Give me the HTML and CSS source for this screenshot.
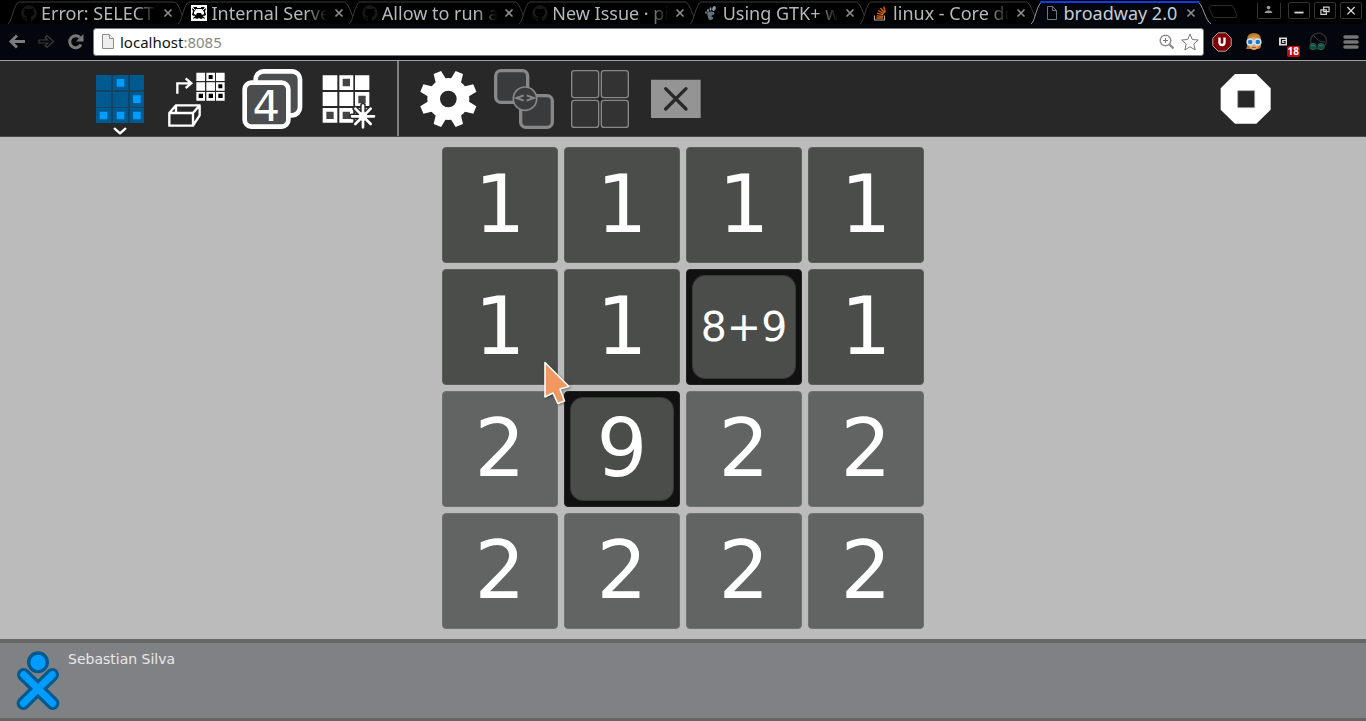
FILE: index.html
```html
<!DOCTYPE html>
<html lang="en">
<head>
    <meta charset="UTF-8">
    <meta name="viewport" content="width=device-width, initial-scale=1.0">
    <title>broadway 2.0</title>
    <link rel="stylesheet" href="styles.css">
</head>
<body>
    <!-- shared shapes -->
    <svg class="defs" width="0" height="0" aria-hidden="true">
        <defs>
            <symbol id="cross" viewBox="0 0 12 12"><path d="M2.500 2.500l7 7M9.500 2.500l-7 7" fill="none" stroke="#909090" stroke-width="1.600"/></symbol>
            <symbol id="octocat" viewBox="0 0 16 16"><path d="M8 .3a8 8 0 0 0-2.500 15.500c.4.1.5-.2.5-.4v-1.500c-2.200.5-2.700-1-2.700-1-.4-1-.9-1.200-.9-1.200-.7-.5 0-.5 0-.5.8 0 1.300.8 1.300.8.7 1.300 1.900.9 2.300.7 0-.5.3-.9.5-1.100-1.800-.2-3.600-.9-3.600-4 0-.8.3-1.500.8-2.100 0-.2-.4-1 .1-2.100 0 0 .7-.2 2.200.8a7 7 0 0 1 4 0c1.500-1 2.200-.8 2.200-.8.5 1.100.1 1.900.1 2.100.5.6.8 1.300.8 2.100 0 3.100-1.900 3.800-3.600 4 .3.200.5.700.5 1.400v2.400c0 .2.1.5.5.4A8 8 0 0 0 8 .3z" fill="#181818"/></symbol>
            <symbol id="tab" viewBox="0 0 180 24" preserveAspectRatio="none"><path d="M0 24C4 22 6 3 11 2H166C171 2 174 22 180 24" vector-effect="non-scaling-stroke"/></symbol>
        </defs>
    </svg>

    <header class="browser">
        <div class="tab-strip">
            <div class="tab">
                <svg class="tab-shape"><use href="#tab"/></svg>
                <svg class="favicon"><use href="#octocat"/></svg>
                <a class="tab-title" href="#">Error: SELECT c</a>
                <button class="tab-close" aria-label="Close tab"><svg><use href="#cross"/></svg></button>
            </div>
            <div class="tab">
                <svg class="tab-shape"><use href="#tab"/></svg>
                <svg class="favicon" viewBox="0 0 16 16"><path d="M0 0h16v16H0z" fill="#fff"/><path d="M3 2h3v1h4V2h3l2 2-1 2 1 4-2 1 1 3-2-1-2 1-2-1-2 1-2-1-2 1 1-3-2-1 1-4-1-2z" fill="#000"/><path d="M5 4h6l2 3v2l-2 1-1-2H6l-1 2-2-1V7z" fill="#fff"/><path d="M1 2l3 3M15 2l-3 3M2 12l2-1M14 12l-2-1" stroke="#fff"/></svg>
                <a class="tab-title" href="#">Internal Serve</a>
                <button class="tab-close" aria-label="Close tab"><svg><use href="#cross"/></svg></button>
            </div>
            <div class="tab">
                <svg class="tab-shape"><use href="#tab"/></svg>
                <svg class="favicon"><use href="#octocat"/></svg>
                <a class="tab-title" href="#">Allow to run ac</a>
                <button class="tab-close" aria-label="Close tab"><svg><use href="#cross"/></svg></button>
            </div>
            <div class="tab">
                <svg class="tab-shape"><use href="#tab"/></svg>
                <svg class="favicon"><use href="#octocat"/></svg>
                <a class="tab-title" href="#">New Issue · pi</a>
                <button class="tab-close" aria-label="Close tab"><svg><use href="#cross"/></svg></button>
            </div>
            <div class="tab">
                <svg class="tab-shape"><use href="#tab"/></svg>
                <svg class="favicon" viewBox="0 0 16 16"><path d="M4 8c3-2.500 8-1.500 7.500.8-.3 1.200-3.200 1.200-3 2.700.2 1 2 0 1.800 1.300C9.800 15.500 6 16 5.200 13z" fill="#60727c"/><g fill="#8194a0"><ellipse cx="11" cy="3.500" rx="1.800" ry="2.500" transform="rotate(25 11 3.500)"/><ellipse cx="7.500" cy="4" rx="1" ry="1.700"/><ellipse cx="5" cy="5.500" rx="1" ry="1.400"/><ellipse cx="3" cy="7.500" rx=".8" ry="1.200"/></g></svg>
                <a class="tab-title" href="#">Using GTK+ wi</a>
                <button class="tab-close" aria-label="Close tab"><svg><use href="#cross"/></svg></button>
            </div>
            <div class="tab">
                <svg class="tab-shape"><use href="#tab"/></svg>
                <svg class="favicon" viewBox="0 0 16 16"><path d="M1.500 10.500v4.500h10v-4.500" fill="none" stroke="#a4a8ac" stroke-width="1.200"/><path d="M3.500 13H10M3.500 10.800l6.500.6M4 8.200l6.300 1.700M5.200 5.500l5.600 3.200M7.500 3l4 5M10.800 1.500l1.500 6" stroke="#d9670c" stroke-width="1.300"/></svg>
                <a class="tab-title" href="#">linux - Core du</a>
                <button class="tab-close" aria-label="Close tab"><svg><use href="#cross"/></svg></button>
            </div>
            <div class="tab active">
                <svg class="tab-shape"><use href="#tab"/></svg>
                <svg class="tab-accent" viewBox="0 0 180 24" preserveAspectRatio="none"><path d="M9 2H168" stroke="#0d3fe0" stroke-width="2"/></svg>
                <svg class="favicon" viewBox="0 0 16 16"><path d="M3.500 1.500h5l4 4v9h-9zM8.500 1.500v4h4" fill="none" stroke="#777"/></svg>
                <a class="tab-title" href="#">broadway 2.0</a>
                <button class="tab-close" aria-label="Close tab"><svg><use href="#cross"/></svg></button>
            </div>
            <button class="new-tab" aria-label="New tab"><svg viewBox="0 0 32 16"><path d="M4 1.500h20q2 0 3 3l3 7q0 2-2 2H8q-2 0-3-3L2 4q0-2 2-2.500z" fill="none" stroke="#2c2c2c"/></svg></button>
            <div class="window-buttons">
                <button class="user" aria-label="User"><svg viewBox="0 0 24 17"><circle cx="11.500" cy="5" r="2" fill="#999"/><path d="M7.500 11V9.500q4-2.500 8 0V11z" fill="#999"/></svg></button>
                <button aria-label="Minimize"><svg viewBox="0 0 22 17"><path d="M6 10.500h10" stroke="#d8d8d8" stroke-width="2"/></svg></button>
                <button aria-label="Restore"><svg viewBox="0 0 22 17"><path d="M9.500 4.500h6v5h-6zM6.500 7.500h6v5h-6z" fill="none" stroke="#d0d0d0" stroke-width="1.300"/></svg></button>
                <button aria-label="Close"><svg viewBox="0 0 22 17"><path d="M7 4.500l8 8M15 4.500l-8 8" stroke="#d8d8d8" stroke-width="1.500"/></svg></button>
            </div>
        </div>

        <div class="nav-bar">
            <button class="nav-button" aria-label="Back"><svg viewBox="0 0 29 30"><path d="M22 14.500H8.500M14 8.500l-6 6 6 6" fill="none" stroke="#7c7c7c" stroke-width="3"/></svg></button>
            <button class="nav-button" aria-label="Forward"><svg viewBox="0 0 29 30"><path d="M7 13h8.500L13 10.500l2-2 6.500 6-6.500 6-2-2 2.500-2.500H7z" fill="none" stroke="#3c3c3c" stroke-width="1.200"/></svg></button>
            <button class="nav-button" aria-label="Reload"><svg viewBox="0 0 29 30"><path d="M19 10.500A6 6 0 1 0 20 17.500" fill="none" stroke="#787878" stroke-width="3"/><path d="M22.500 7v7.500H15z" fill="#787878"/></svg></button>
            <div class="address">
                <svg class="page-icon" viewBox="0 0 12 15"><path d="M.5.5h7l4 4v10H.5z" fill="#eee" stroke="#8c8c8c"/><path d="M7.500.5v4h4" fill="#fff" stroke="#8c8c8c"/></svg>
                <a class="url" href="#">localhost<span>:8085</span></a>
                <button aria-label="Zoom"><svg viewBox="0 0 16 18"><circle cx="6.500" cy="7.500" r="5.300" fill="none" stroke="#8c8c8c" stroke-width="1.400"/><path d="M4 7.500h5M6.500 5v5" stroke="#777"/><path d="M10.500 11.500l4 4" stroke="#8c8c8c" stroke-width="2.300"/></svg></button>
                <button class="bookmark" aria-label="Bookmark"><svg viewBox="0 0 18 18"><path d="M9 1l2.300 5.500 6 .5-4.500 4 1.400 6L9 13.700 3.800 17l1.400-6L.7 7l6-.5z" fill="#fff" stroke="#777"/></svg></button>
            </div>
            <button class="extension" aria-label="Ad blocker">
                <svg viewBox="0 0 20 20"><path d="M6.200.800h7.600l5.400 5.400v7.600l-5.400 5.400H6.200L.8 13.800V6.200z" fill="#800000" stroke="#b9a5a5"/><path d="M7.500 5.500v5a2.500 2.500 0 0 0 5 0v-5" fill="none" stroke="#fff" stroke-width="2.400"/></svg>
            </button>
            <button class="extension" aria-label="Goggles">
                <svg viewBox="0 0 20 20"><path d="M3 8q0-7 7-7t7 7v7l-2 2H2q2-3 1-9z" fill="#b3782a"/><ellipse cx="10" cy="11" rx="5.500" ry="7" fill="#e7a36a"/><path d="M4 7q2-5 10-4l2 4-6-2z" fill="#c88a35"/><circle cx="6.200" cy="10" r="3" fill="#1a78c2" stroke="#cfe6f5" stroke-width="1.500"/><circle cx="13.800" cy="10" r="3" fill="#1a78c2" stroke="#cfe6f5" stroke-width="1.500"/><path d="M8 15.500h4" stroke="#a45b36"/></svg>
            </button>
            <button class="extension" aria-label="Notifications, 18 new">
                <svg viewBox="0 0 20 20"><path d="M3 5.500h8v8H3z" fill="#ddd"/><path d="M9.500 7.500h-4v4h3.500V9.500H7.500" fill="none" stroke="#111" stroke-width="1.200"/></svg>
                <span class="badge">18</span>
            </button>
            <button class="extension" aria-label="Night mode">
                <svg viewBox="0 0 20 20"><circle cx="10.500" cy="9" r="8" fill="none" stroke="#2c2c2c" stroke-width="1.500"/><path d="M6 4l5 5 6 1" fill="none" stroke="#3a3a3a"/><g fill="#174b40" stroke="#235f52"><rect x="2" y="11.500" width="6" height="6" rx="2"/><rect x="10" y="11.500" width="6" height="6" rx="2"/></g><path d="M3 13.500h4M11 13.500h4" stroke="#2a7866"/></svg>
            </button>
            <button class="extension" aria-label="Menu">
                <svg viewBox="0 0 20 20"><path d="M5 5h12M5 10h12M5 15h12" stroke="#757575" stroke-width="3.500" stroke-linecap="round"/></svg>
            </button>
        </div>
    </header>

    <div class="toolbar">
        <button aria-label="Activity">
            <svg viewBox="6 3 228 225">
                <path d="M48 45h45v45H48zM99 45h45v45H99zM149 45h43v45h-43zM48 96h45v45H48zM99 96h45v45H99zM149 96h43v45h-43zM48 144h45v45H48zM99 144h45v45H99zM149 144h43v45h-43z" fill="#005a90"/>
                <path d="M93 45h6v144h-6zM144 45h5v144h-5zM48 90h144v6H48zM48 141h144v3H48z" fill="#124466"/>
                <path d="M110 57h23v23h-23zM159 106h23v23h-23zM59 155h23v23H59zM110 155h23v23h-23zM159 155h23v23h-23z" fill="#009dff"/>
                <path d="M104 206l16 14 16-14" fill="none" stroke="#fff" stroke-width="7" stroke-linecap="round" stroke-linejoin="round"/>
            </svg>
        </button>
        <button aria-label="Export pattern">
            <svg viewBox="234 3 228 225">
                <path d="M292 101V70h42M317 55l17 15-17 14" fill="none" stroke="#fff" stroke-width="7"/>
                <path d="M349 38h26v25h-26zM379 38h26v25h-26zM408 38h26v25h-26zM349 67h26v25h-26zM379 67h26v25h-26zM408 67h26v25h-26zM349 96h26v26h-26zM379 96h26v26h-26zM408 96h26v26h-26z" fill="#fff"/>
                <path d="M386 45h12v12h-12zM415 73h12v12h-12zM356 101h13v13h-13zM386 101h13v13h-13zM415 101h13v13h-13z" fill="#000"/>
                <path d="M268 159h71v38h-71zM268 159l20-23h71l-20 23M359 136v30l-20 31M288 136v22M339 159l20-23" fill="none" stroke="#fff" stroke-width="7" stroke-linejoin="round"/>
            </svg>
        </button>
        <button aria-label="Number cards">
            <svg viewBox="462 3 228 225">
                <rect x="527" y="34" width="133" height="132" rx="24" fill="#4c4d4f" stroke="#fff" stroke-width="14"/>
                <rect x="494" y="68" width="131" height="132" rx="20" fill="#4c4d4f" stroke="#fff" stroke-width="14"/>
                <text class="card-number" x="559" y="182">4</text>
            </svg>
        </button>
        <button aria-label="New pattern">
            <svg viewBox="690 3 228 225">
                <path d="M728 46h44v44h-44zM778 46h42v44h-42zM825 46h43v44h-43zM728 96h44v42h-44zM778 96h42v42h-42zM825 96h43v42h-43zM728 144h44v44h-44zM778 144h42v44h-42zM825 144h43v44h-43z" fill="#fff"/>
                <path d="M788 56h22v23h-22zM835 107h22v23h-22zM739 155h22v22h-22zM788 155h22v22h-22z" fill="#444"/>
                <path d="M849 137v65M816 169h66M826 146l46 46M872 146l-46 46" stroke="#282828" stroke-width="17" stroke-linecap="round"/>
                <path d="M849 137v65M816 169h66M826 146l46 46M872 146l-46 46" stroke="#fff" stroke-width="8" stroke-linecap="round"/>
                <circle cx="849" cy="169" r="13" fill="#fff"/>
            </svg>
        </button>
        <div class="separator"></div>
        <button aria-label="Settings">
            <svg viewBox="45 3 228 225">
                <g transform="translate(160 117)">
                    <g fill="#fff" transform="rotate(22.500)">
                        <path id="tooth" d="M-17-55L-12-86H12L17-55z"/>
                        <use href="#tooth" transform="rotate(45)"/><use href="#tooth" transform="rotate(90)"/><use href="#tooth" transform="rotate(135)"/><use href="#tooth" transform="rotate(180)"/><use href="#tooth" transform="rotate(225)"/><use href="#tooth" transform="rotate(270)"/><use href="#tooth" transform="rotate(315)"/>
                    </g>
                    <circle r="44" fill="none" stroke="#fff" stroke-width="38"/>
                </g>
            </svg>
        </button>
        <button aria-label="Match pairs">
            <svg viewBox="273 3 228 225">
                <rect x="302" y="32" width="96" height="95" rx="16" fill="#3a3b3d" stroke="#888" stroke-width="10"/>
                <rect x="377" y="107" width="95" height="95" rx="16" fill="#3a3b3d" stroke="#888" stroke-width="10"/>
                <circle cx="390" cy="116" r="35" fill="#3a3b3d" stroke="#888" stroke-width="5"/>
                <path d="M386 106l-22 8 22 8M395 106l22 8-22 8" fill="none" stroke="#888" stroke-width="6"/>
            </svg>
        </button>
        <button aria-label="Grid size">
            <svg viewBox="501 3 228 225" fill="#333" stroke="#888" stroke-width="4">
                <rect x="530" y="32" width="81" height="81" rx="8"/><rect x="619" y="32" width="81" height="81" rx="8"/>
                <rect x="530" y="121" width="81" height="81" rx="8"/><rect x="619" y="121" width="81" height="81" rx="8"/>
            </svg>
        </button>
        <button aria-label="Clear">
            <svg viewBox="729 3 228 225">
                <path d="M768 59h149v115H768z" fill="#949494"/>
                <path d="M812 86l61 61M873 86l-61 61" stroke="#282828" stroke-width="10" stroke-linecap="round"/>
            </svg>
        </button>
        <button class="stop" aria-label="Stop">
            <svg viewBox="54 3 228 225">
                <path d="M135 42h64l43 43v64l-43 42h-64l-43-42V85z" fill="#fff"/>
                <path d="M143 92h51v51h-51z" fill="#282828" stroke="#aaa" stroke-width="2"/>
            </svg>
        </button>
    </div>

    <main class="game">
        <div class="board">
            <button class="tile">1</button>
            <button class="tile">1</button>
            <button class="tile">1</button>
            <button class="tile">1</button>

            <button class="tile">1</button>
            <button class="tile">1</button>
            <button class="tile selected sum"><span>8+9</span></button>
            <button class="tile">1</button>

            <button class="tile light">2</button>
            <button class="tile selected"><span>9</span></button>
            <button class="tile light">2</button>
            <button class="tile light">2</button>

            <button class="tile light">2</button>
            <button class="tile light">2</button>
            <button class="tile light">2</button>
            <button class="tile light">2</button>

            <svg class="pointer" viewBox="0 0 40 54"><path d="M10 7.500L34 31.500 25 34l4.500 12-6.700 2.500L18 38l-8 4z" fill="#f09860" stroke="#fff" stroke-width="1.600" stroke-linejoin="round"/></svg>
        </div>
    </main>

    <footer class="players">
        <svg class="buddy" viewBox="48 57 132 183" fill="#009dff" stroke="#005a8f" stroke-linecap="round">
            <g stroke-width="40"><path d="M71 131l87 86M157 131l-87 86"/></g>
            <g stroke="#009dff" stroke-width="21"><path d="M71 131l87 86M157 131l-87 86"/></g>
            <circle cx="114" cy="94" r="28" stroke-width="10"/>
        </svg>
        <span class="player-name">Sebastian Silva</span>
    </footer>
</body>
</html>
```
FILE: styles.css
```css
* {
    box-sizing: border-box;
    margin: 0;
    padding: 0;
}

body {
    background: #bbb;
    min-height: 100vh;
    display: flex;
    flex-direction: column;
    font-family: 'DejaVu Sans', sans-serif;
}

button {
    background: none;
    border: none;
    color: inherit;
    font: inherit;
    cursor: pointer;
}

a {
    color: inherit;
    text-decoration: none;
}

svg {
    display: block;
}

.defs {
    position: absolute;
}

/* browser window */
.browser {
    background: #03070d;
    border-bottom: 1px solid #a0a0a0;
    font-family: 'Noto Sans', sans-serif;
}

.tab-strip {
    display: flex;
    height: 25px;
    padding: 0 4px 0 8px;
    background: #000;
    border-bottom: 1px solid #03070d;
}

.tab {
    position: relative;
    display: flex;
    align-items: center;
    flex: 1;
    min-width: 0;
    gap: 4px;
    padding: 1px 4px 0 13px;
    color: #b4b8ba;
}

.tab-shape,
.tab-accent {
    position: absolute;
    top: 0;
    left: 0;
    width: calc(100% + 10px);
    height: 24px;
    fill: #000;
    stroke: #3a3a3a;
}

.tab.active {
    color: #c4cdd4;
}

.tab.active .tab-shape {
    fill: #03070d;
    stroke: #999;
}

.favicon {
    position: relative;
    flex: none;
    width: 16px;
    height: 16px;
}

.tab-title {
    position: relative;
    flex: 1;
    min-width: 0;
    margin-right: -14px;
    overflow: hidden;
    white-space: nowrap;
    font-size: 18px;
    line-height: 22px;
    -webkit-mask-image: linear-gradient(to right, #000 72%, transparent 88%);
    mask-image: linear-gradient(to right, #000 72%, transparent 88%);
}

.tab.active .tab-title {
    -webkit-mask-image: none;
    mask-image: none;
}

.tab-close {
    position: relative;
    width: 12px;
    height: 12px;
}

.tab-close svg {
    width: 12px;
    height: 12px;
}

.new-tab {
    width: 32px;
    margin: 4px 18px 4px 6px;
}

.window-buttons {
    display: flex;
    align-items: flex-start;
    gap: 4px;
    padding-top: 2px;
}

.window-buttons button {
    width: 22px;
    height: 17px;
    border: 1px solid #333;
    border-radius: 2px;
}

.window-buttons .user {
    width: 24px;
    margin-right: 3px;
    border-top-color: #000;
}

.nav-bar {
    display: flex;
    align-items: center;
    height: 35px;
    padding: 0 0 2px 3px;
}

.nav-button {
    width: 29px;
    height: 30px;
}

.address {
    flex: 1;
    display: flex;
    align-items: center;
    gap: 6px;
    height: 28px;
    margin: 0 2px 0 3px;
    padding: 0 4px 0 8px;
    background: #fff;
    border: 1px solid #777;
    border-radius: 3px;
}

.page-icon {
    width: 12px;
    height: 15px;
}

.address button {
    width: 16px;
    height: 18px;
}

.address .bookmark {
    width: 18px;
}

.url {
    flex: 1;
    color: #111;
    font-size: 15px;
    line-height: 22px;
}

.url span {
    color: #888;
}

.extension {
    position: relative;
    display: flex;
    align-items: center;
    justify-content: center;
    width: 32px;
    height: 32px;
}

.extension svg {
    width: 20px;
    height: 20px;
}

.badge {
    position: absolute;
    right: 2px;
    bottom: 1px;
    padding: 0 1px;
    background: #c4080c;
    border-radius: 2px;
    color: #fff;
    font-size: 10px;
    font-weight: 700;
    line-height: 11px;
}

/* activity toolbar */
.toolbar {
    display: flex;
    padding: 0 82px;
    background: #282828;
    border-bottom: 1px solid #484848;
}

.toolbar button,
.toolbar svg {
    width: 76px;
    height: 75px;
}

.toolbar .stop {
    margin-left: auto;
}

.separator {
    width: 2px;
    margin: 0 11px;
    background: #808080;
}

.card-number {
    fill: #fff;
    font-size: 130px;
    text-anchor: middle;
}

/* board */
.game {
    flex: 1;
    padding: 10px 0 9px;
}

.board {
    position: relative;
    display: grid;
    grid-template-columns: repeat(4, 116px);
    grid-auto-rows: 116px;
    gap: 6px;
    justify-content: center;
    width: max-content;
    margin: 0 auto;
}

.tile {
    background: #4b4d4a;
    border: 1px solid #5c5e5b;
    border-radius: 4px;
    color: #fff;
    font-size: 80px;
    line-height: 112px;
}

.tile.light {
    background: #626463;
    border-color: #70726f;
}

.tile.selected {
    padding: 5px;
    background: #111;
    border-color: #222;
}

.tile.selected span {
    display: block;
    height: 104px;
    background: #4b4d4a;
    border: 1px solid #383a38;
    border-radius: 13px;
    line-height: 102px;
}

.tile.sum {
    font-size: 41px;
}

.pointer {
    position: absolute;
    top: 208px;
    left: 93px;
    width: 40px;
    height: 54px;
    filter: drop-shadow(1px 1px 1px rgba(0, 0, 0, 0.4));
    pointer-events: none;
}

/* players bar */
.players {
    display: flex;
    gap: 8px;
    padding: 7px 16px;
    background: #808184;
    border-top: 4px solid #666;
    border-bottom: 3px solid #666;
}

.buddy {
    width: 44px;
    height: 61px;
}

.player-name {
    color: #e8e8e8;
    font-size: 14px;
    line-height: 18px;
}
```
